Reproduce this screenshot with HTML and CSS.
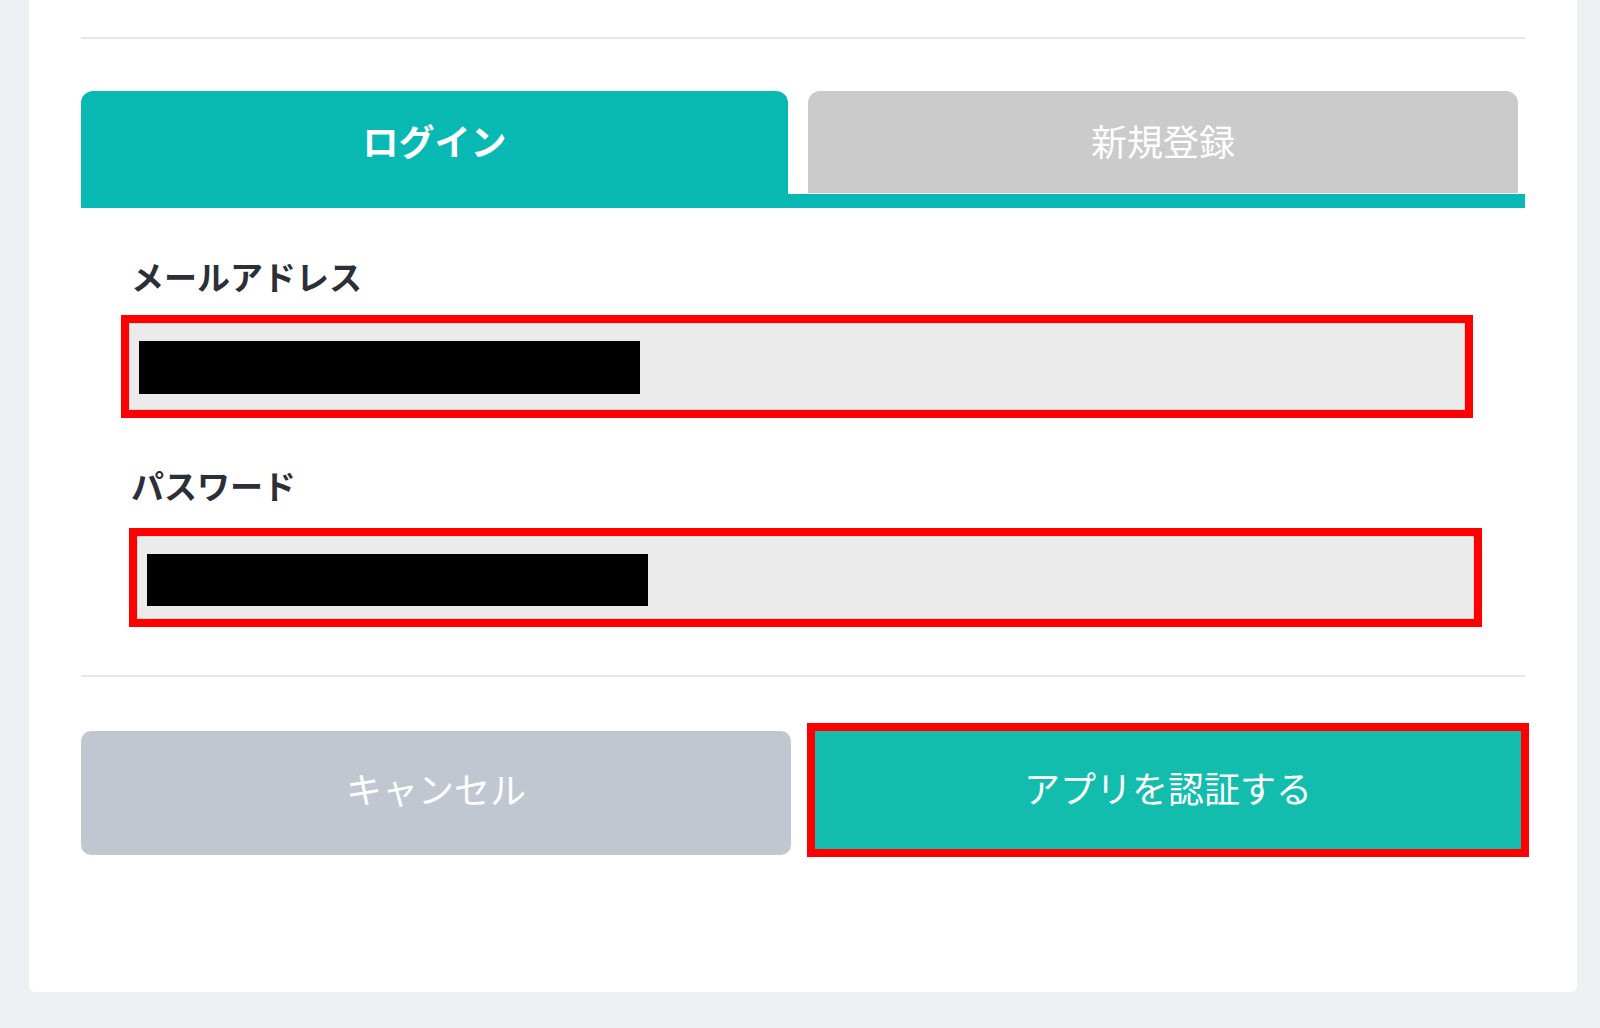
FILE: index.html
```html
<!DOCTYPE html>
<html lang="ja">
<head>
<meta charset="utf-8">
<title>ログイン</title>
<link rel="stylesheet" href="styles.css">
</head>
<body>
<div class="card">
  <div class="divider"></div>
  <div class="tabs">
    <div class="tab tab-active">ログイン</div>
    <div class="tab tab-inactive">新規登録</div>
  </div>
  <div class="field-label label-email">メールアドレス</div>
  <div class="mark mark-email">
    <div class="input"><span class="redact"></span></div>
  </div>
  <div class="field-label label-pass">パスワード</div>
  <div class="mark mark-pass">
    <div class="input"><span class="redact"></span></div>
  </div>
  <div class="divider divider-bottom"></div>
  <div class="actions">
    <button class="btn btn-cancel">キャンセル</button>
    <div class="mark mark-btn">
      <button class="btn btn-auth">アプリを認証する</button>
    </div>
  </div>
</div>
</body>
</html>
```
FILE: styles.css
```css
html, body {
  margin: 0;
  padding: 0;
  background: #eff0f4;
  font-family: "Noto Sans CJK JP", "Noto Sans", sans-serif;
}

.card {
  margin-left: 29px;
  width: 1548px;
  box-sizing: border-box;
  background: #ffffff;
  padding: 37px 52px 135px 52px;
  border-radius: 0 0 6px 6px;
}

.divider {
  height: 2px;
  background: #e5e6e8;
}

.tabs {
  margin-top: 52px;
  display: flex;
  align-items: flex-start;
  border-bottom: 14px solid #08b9b3;
  height: 103px;
}

.tab {
  flex-shrink: 0;
  display: flex;
  align-items: center;
  justify-content: center;
  color: #ffffff;
  font-size: 36px;
  border-radius: 12px 12px 0 0;
  height: 103px;
  padding-bottom: 5px;
  box-sizing: border-box;
}

.tab-active {
  width: 707px;
  background: #08b9b3;
  font-weight: 700;
}

.tab-inactive {
  width: 710px;
  margin-left: 20px;
  height: 102px;
  background: #cbcbcb;
  font-weight: 400;
}

.field-label {
  font-size: 33px;
  line-height: 33px;
  font-weight: 700;
  color: #2b2f38;
  margin-left: 50px;
}

.label-email { margin-top: 52px; }
.label-pass { margin-top: 51px; }

.mark {
  border: 8px solid #ff0000;
  box-sizing: border-box;
  flex-shrink: 0;
}

.mark-email {
  margin-top: 22px;
  margin-left: 40px;
  width: 1352px;
  height: 103px;
}

.mark-pass {
  margin-top: 26px;
  margin-left: 48px;
  width: 1353px;
  height: 99px;
}

.input {
  height: 100%;
  box-sizing: border-box;
  background: #ebebeb;
  border: 1px solid #d6d6d6;
  padding: 17px 0 0 9px;
}

.redact {
  display: block;
  width: 501px;
  height: 53px;
  background: #000000;
}

.mark-pass .redact {
  height: 52px;
}

.divider-bottom {
  margin-top: 48px;
}

.actions {
  margin-top: 46px;
  display: flex;
  align-items: flex-start;
}

.btn {
  border: none;
  font-family: inherit;
  font-size: 36px;
  font-weight: 400;
  color: #ffffff;
  padding: 0 0 10px 0;
  margin: 0;
  flex-shrink: 0;
}

.btn-cancel {
  margin-top: 8px;
  width: 710px;
  height: 124px;
  background: #c1c7d1;
  border-radius: 10px;
}

.mark-btn {
  margin-left: 16px;
  width: 722px;
  height: 134px;
}

.btn-auth {
  width: 100%;
  height: 100%;
  background: #12bdad;
  padding-bottom: 6px;
}
```
